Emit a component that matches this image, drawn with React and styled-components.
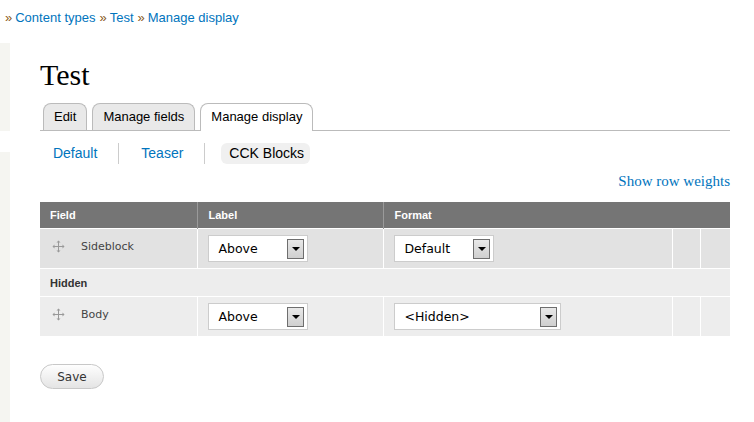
import React from "react";
import styled, { createGlobalStyle } from "styled-components";

const GlobalStyle = createGlobalStyle`
  body {
    margin: 0;
    background: #fff;
    font-family: "Liberation Sans", Arial, sans-serif;
    color: #333;
  }
`;

const Page = styled.div`
  width: 754px;
  height: 422px;
  overflow: hidden;
`;

const Breadcrumb = styled.div`
  height: 36px;
  padding: 9px 0 0 5px;
  box-sizing: border-box;
  font-size: 13px;
  line-height: 18px;
`;

const Raquo = styled.span`
  color: #8a5a1a;
  margin-right: 3px;
`;

const Crumb = styled.a`
  color: #0074bd;
  text-decoration: none;
  margin-right: 4px;
`;

const Layout = styled.div`
  display: flex;
`;

const Sidebar = styled.div`
  width: 10px;
  display: flex;
  flex-direction: column;
  gap: 21px;
  padding-top: 7px;
`;

const SideBlock = styled.div`
  background: #f5f5f1;
  height: ${(p) => p.$h}px;
`;

const Main = styled.div`
  flex: 1;
  padding: 0 24px 0 30px;
`;

const Title = styled.h1`
  margin: 21px 0 0;
  font-family: "Liberation Serif", "Times New Roman", serif;
  font-weight: normal;
  font-size: 30px;
  line-height: 36px;
  color: #000;
`;

const Tabs = styled.ul`
  list-style: none;
  margin: 10px 0 0;
  padding: 0 0 0 3px;
  display: flex;
  gap: 5px;
  border-bottom: 1px solid #bbb;
  height: 27px;
`;

const Tab = styled.li`
  height: 26px;
  padding: 0 10px;
  border: 1px solid #bbb;
  border-bottom: none;
  border-radius: 8px 8px 0 0;
  background: ${(p) => (p.$active ? "#fff" : "#e9e9e9")};
  font-size: 13px;
  line-height: 26px;
  color: #000;
  ${(p) => p.$active && "height: 27px; margin-bottom: -1px;"}
`;

const SubTabs = styled.ul`
  list-style: none;
  margin: 12px 0 0;
  padding: 0 0 0 5px;
  display: flex;
`;

const SubTab = styled.li`
  padding: 0 13px 0 ${(p) => (p.$first ? 0 : p.$pl || 14)}px;
  border-left: ${(p) => (p.$first ? "none" : "1px solid #ccc")};
  display: flex;
  align-items: center;
  height: 21px;
`;

const SubLink = styled.a`
  font-size: 14px;
  line-height: 21px;
  padding: 0 ${(p) => (p.$active ? 6 : 8)}px 0 8px;
  border-radius: 6px;
  color: ${(p) => (p.$active ? "#000" : "#0074bd")};
  background: ${(p) => (p.$active ? "#f0f0f0" : "transparent")};
  text-decoration: none;
`;

const WeightsRow = styled.div`
  display: flex;
  justify-content: flex-end;
  margin-top: 8px;
  height: 18px;
`;

const WeightsLink = styled.a`
  font-family: "Liberation Serif", "DejaVu Serif", serif;
  font-size: 15px;
  line-height: 18px;
  color: #0074bd;
  text-decoration: none;
`;

const Table = styled.table`
  width: 690px;
  margin-top: 12px;
  border-collapse: collapse;
  table-layout: fixed;
`;

const Th = styled.th`
  background: #757575;
  color: #fff;
  font-size: 11px;
  font-weight: bold;
  text-align: left;
  height: 26px;
  padding: 0 10px;
  border-left: 1px solid #9a9a9a;
  &:first-child {
    border-left: none;
  }
`;

const Tr = styled.tr`
  background: ${(p) => p.$bg};
  border-top: 1px solid #fff;
`;

const Td = styled.td`
  height: 39px;
  padding: 0 10px;
  border-left: 1px solid #fff;
  vertical-align: middle;
  &:first-child {
    border-left: none;
  }
`;

const RegionCell = styled.td`
  height: 27px;
  padding: 0 10px;
  font-size: 11px;
  font-weight: bold;
  color: #333;
`;

const FieldName = styled.div`
  display: flex;
  align-items: center;
  gap: 16px;
  margin: -4px 0 0 2px;
  font-family: "DejaVu Sans", Verdana, sans-serif;
  font-size: 11px;
  color: #444;
`;

const Select = styled.div`
  width: ${(p) => p.$w}px;
  height: 27px;
  box-sizing: border-box;
  background: #fff;
  border: 1px solid #ccc;
  display: flex;
  align-items: center;
  justify-content: space-between;
  padding: 0 3px 0 9px;
  font-family: "DejaVu Sans", Verdana, sans-serif;
  font-size: 12.5px;
  color: #000;
`;

const Arrow = styled.span`
  width: 17px;
  height: 20px;
  box-sizing: border-box;
  border: 1px solid #6e6e6e;
  background: linear-gradient(#e8e8e8, #cfcfcf);
  display: flex;
  align-items: center;
  justify-content: center;
  &::after {
    content: "";
    border-left: 4px solid transparent;
    border-right: 4px solid transparent;
    border-top: 4px solid #000;
  }
`;

const SaveButton = styled.button`
  margin-top: 28px;
  width: 64px;
  height: 25px;
  border: 1px solid #c8c8c8;
  border-radius: 13px;
  background: linear-gradient(#fefefe, #e4e4e4);
  font-family: "DejaVu Sans", Verdana, sans-serif;
  font-size: 12px;
  color: #333;
  padding: 0;
`;

function DragIcon() {
  return (
    <svg width="13" height="13" viewBox="0 0 13 13" fill="none">
      <path d="M6.5 1v11M1 6.5h11" stroke="#999" strokeWidth="1" />
      <path d="M6.5 0.5l-2 2h4zM6.5 12.5l-2-2h4zM0.5 6.5l2-2v4zM12.5 6.5l-2-2v4z" fill="#999" />
    </svg>
  );
}

function Dropdown({ value, width }) {
  return (
    <Select $w={width}>
      <span>{value}</span>
      <Arrow />
    </Select>
  );
}

function FieldRow({ name, label, format, formatWidth, bg }) {
  return (
    <Tr $bg={bg}>
      <Td>
        <FieldName>
          <DragIcon />
          {name}
        </FieldName>
      </Td>
      <Td>
        <Dropdown value={label} width={100} />
      </Td>
      <Td>
        <Dropdown value={format} width={formatWidth} />
      </Td>
      <Td />
      <Td />
    </Tr>
  );
}

export default function App() {
  return (
    <Page>
      <GlobalStyle />
      <Breadcrumb>
        <Raquo>»</Raquo>
        <Crumb href="#">Content types</Crumb>
        <Raquo>»</Raquo>
        <Crumb href="#">Test</Crumb>
        <Raquo>»</Raquo>
        <Crumb href="#">Manage display</Crumb>
      </Breadcrumb>
      <Layout>
        <Sidebar>
          <SideBlock $h={88} />
          <SideBlock $h={280} />
        </Sidebar>
        <Main>
          <Title>Test</Title>
          <Tabs>
            <Tab>Edit</Tab>
            <Tab>Manage fields</Tab>
            <Tab $active>Manage display</Tab>
          </Tabs>
          <SubTabs>
            <SubTab $first>
              <SubLink href="#">Default</SubLink>
            </SubTab>
            <SubTab>
              <SubLink href="#">Teaser</SubLink>
            </SubTab>
            <SubTab $pl={16}>
              <SubLink $active href="#">CCK Blocks</SubLink>
            </SubTab>
          </SubTabs>
          <WeightsRow>
            <WeightsLink href="#">Show row weights</WeightsLink>
          </WeightsRow>
          <Table>
            <colgroup>
              <col style={{ width: 158 }} />
              <col style={{ width: 186 }} />
              <col style={{ width: 289 }} />
              <col style={{ width: 28 }} />
              <col style={{ width: 29 }} />
            </colgroup>
            <thead>
              <tr>
                <Th>Field</Th>
                <Th>Label</Th>
                <Th colSpan={3}>Format</Th>
              </tr>
            </thead>
            <tbody>
              <FieldRow name="Sideblock" label="Above" format="Default" formatWidth={100} bg="#e2e2e2" />
              <Tr $bg="#ededed">
                <RegionCell colSpan={5}>Hidden</RegionCell>
              </Tr>
              <FieldRow name="Body" label="Above" format="<Hidden>" formatWidth={167} bg="#ededed" />
            </tbody>
          </Table>
          <SaveButton>Save</SaveButton>
        </Main>
      </Layout>
    </Page>
  );
}
